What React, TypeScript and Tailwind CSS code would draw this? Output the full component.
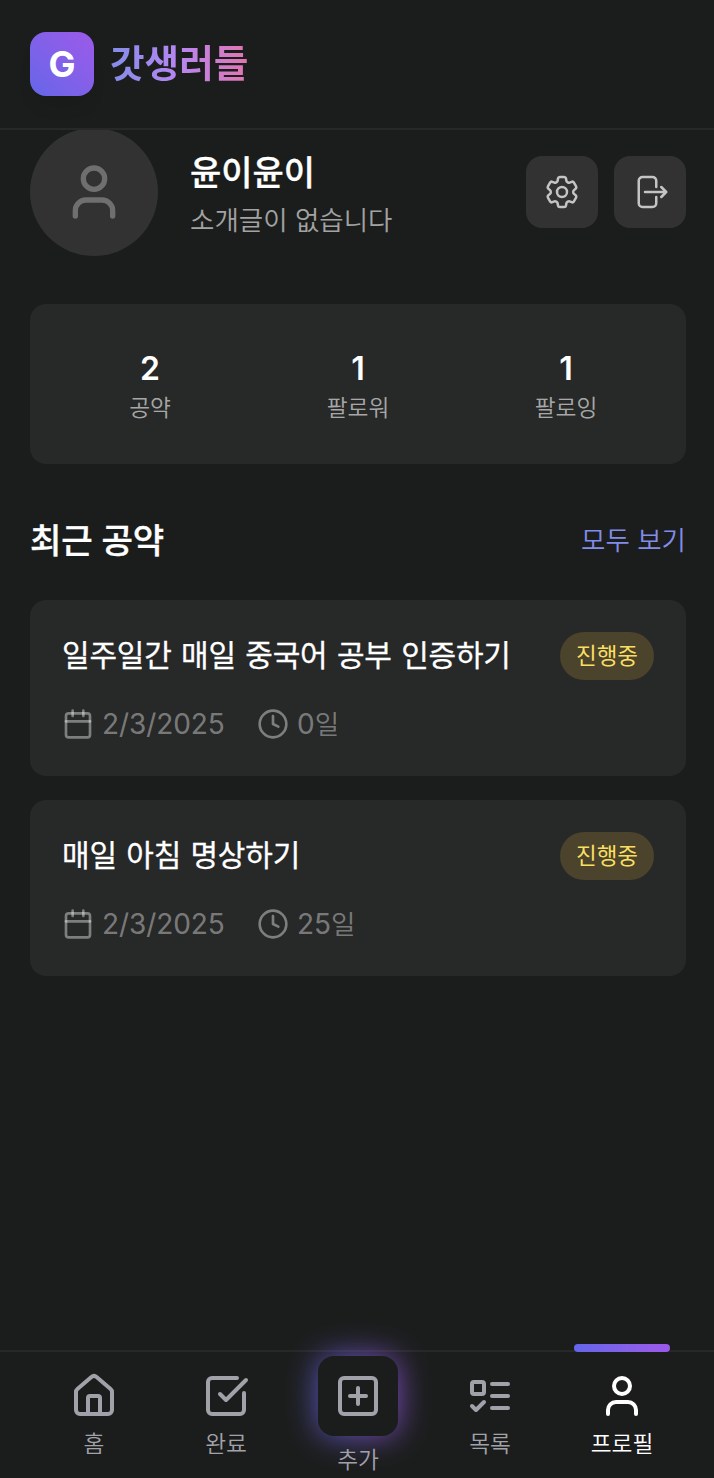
import type { ReactNode } from "react";
import { Calendar, Clock, House, SquarePlus, User } from "lucide-react";
import { HiOutlineArrowRightOnRectangle, HiOutlineCog6Tooth } from "react-icons/hi2";

function CheckBoxIcon() {
  return (
    <svg width="48" height="48" viewBox="0 0 24 24" fill="none" stroke="currentColor" strokeWidth="2" strokeLinecap="round" strokeLinejoin="round">
      <path d="M21 10.5V19a2 2 0 0 1-2 2H5a2 2 0 0 1-2-2V5a2 2 0 0 1 2-2h12.5" />
      <path d="m9 11 3 3L22 4" />
    </svg>
  );
}

function TodoIcon() {
  return (
    <svg width="48" height="48" viewBox="0 0 24 24" fill="none" stroke="currentColor" strokeWidth="2" strokeLinecap="round" strokeLinejoin="round">
      <rect x="3" y="5" width="6" height="6" rx="1" />
      <path d="m3 17 2 2 4-4" />
      <path d="M13 6h8" />
      <path d="M13 12h8" />
      <path d="M13 18h8" />
    </svg>
  );
}

function Stat({ value, label }: { value: string; label: string }) {
  return (
    <div className="flex flex-1 flex-col items-center">
      <span className="h-10 text-[32px] font-semibold leading-[41px] text-white">{value}</span>
      <span className="h-10 text-[22.7px] font-[350] leading-[40px] text-white/60">{label}</span>
    </div>
  );
}

function PledgeCard({ title, date, days }: { title: string; date: string; days: string }) {
  return (
    <article className="flex h-[176px] flex-col rounded-2xl bg-[#272828] px-8 pt-8">
      <div className="flex h-12 items-center justify-between">
        <h3 className="h-12 text-[30px] leading-[46px] tracking-[-0.2px] text-white [-webkit-text-stroke:0.3px] [word-spacing:1.2px]">{title}</h3>
        <span className="flex h-12 w-[94px] justify-center rounded-full bg-[#4b432b] text-[22.5px] leading-[47px] text-[#f8df62]">진행중</span>
      </div>
      <div className="mt-6 flex h-10 items-center text-[28px] text-white/40">
        <span className="flex w-[195px] items-center gap-2">
          <Calendar size={32} />
          <span className="tracking-[-0.08px]">{date}</span>
        </span>
        <span className="flex items-center gap-2">
          <Clock size={32} />
          <span>
            {days}
            <span className="text-[26.5px] font-[350]">일</span>
          </span>
        </span>
      </div>
    </article>
  );
}

function NavItem({ icon, label, active = false }: { icon: ReactNode; label: string; active?: boolean }) {
  return (
    <a className={`relative flex w-[132px] flex-col items-center pt-5 ${active ? "text-white" : "text-[#a1a1a9]"}`}>
      {active && <span className="absolute -top-2 left-[18px] h-2 w-24 rounded-full bg-linear-to-r from-[#6466e9] to-[#9c59e9]" />}
      {icon}
      <span className="mt-2 text-[22.7px] font-[350] leading-[32px]">{label}</span>
    </a>
  );
}

export default function App() {
  return (
    <div className="flex h-[1478px] w-[714px] flex-col overflow-hidden bg-[#1b1d1c] font-['Inter','Noto_Sans_CJK_KR',sans-serif]">
      <header className="relative z-10 flex h-[130px] shrink-0 items-center gap-4 border-b-2 border-[#272828] bg-[#1b1d1c] pl-[30px]">
        <div className="flex size-16 items-center justify-center rounded-2xl bg-linear-to-tr from-[#6466e9] to-[#9c59e9] text-[36px] font-bold text-white shadow-[0_14px_18px_-6px_rgba(0,0,0,0.1)]">
          G
        </div>
        <h1 className="h-14 bg-linear-to-r from-[#828de9] via-[#b685f2] to-[#e274b1] bg-clip-text text-[37.6px] font-bold leading-[55px] text-transparent">갓생러들</h1>
      </header>

      <main className="-mt-[2px] flex flex-1 flex-col pl-[30px] pr-[28px]">
        <section className="flex h-32 items-center">
          <div className="flex size-32 items-center justify-center rounded-full bg-[#323232] text-[#6f6f6f]">
            <User size={64} />
          </div>
          <div className="ml-8 flex-1 pt-[6px]">
            <h2 className="h-[50px] text-[34px] font-medium leading-[49px] text-white [-webkit-text-stroke:0.3px]">윤이윤이</h2>
            <p className="h-[44px] text-[26.5px] font-[350] leading-[44px] text-white/60">소개글이 없습니다</p>
          </div>
          <div className="flex gap-4 text-[#c4c4c4]">
            <button className="flex size-[72px] items-center justify-center rounded-2xl bg-[#323232]">
              <HiOutlineCog6Tooth size={40} />
            </button>
            <button className="flex size-[72px] items-center justify-center rounded-2xl bg-[#323232]">
              <HiOutlineArrowRightOnRectangle size={40} />
            </button>
          </div>
        </section>

        <section className="mt-12 flex h-40 rounded-2xl bg-[#272828] px-4 pt-11">
          <Stat value="2" label="공약" />
          <Stat value="1" label="팔로워" />
          <Stat value="1" label="팔로잉" />
        </section>

        <section className="mt-12">
          <div className="flex h-14 items-center justify-between">
            <h2 className="h-14 text-[34.2px] font-medium leading-[57px] tracking-[-0.2px] text-white [-webkit-text-stroke:0.3px]">최근 공약</h2>
            <a className="h-14 text-[26.5px] font-[350] leading-[56px] text-[#828de9]">모두 보기</a>
          </div>
          <div className="mt-8 flex flex-col gap-6">
            <PledgeCard title="일주일간 매일 중국어 공부 인증하기" date="2/3/2025" days="0" />
            <PledgeCard title="매일 아침 명상하기" date="2/3/2025" days="25" />
          </div>
        </section>
      </main>

      <nav className="flex h-32 shrink-0 border-t-2 border-[#272828] pl-[28px]">
        <NavItem icon={<House size={48} />} label="홈" />
        <NavItem icon={<CheckBoxIcon />} label="완료" />
        <a className="relative flex w-[132px] flex-col items-center pt-1 text-[#a1a1a9]">
          <span className="absolute left-[26px] top-1 size-20 rounded-2xl bg-linear-to-r from-[#6466e9] to-[#9c59e9] opacity-80 blur-lg" />
          <span className="relative flex size-20 items-center justify-center rounded-2xl bg-[#1b1d1c]">
            <SquarePlus size={48} />
          </span>
          <span className="relative mt-2 text-[22.7px] font-[350] leading-[32px]">추가</span>
        </a>
        <NavItem icon={<TodoIcon />} label="목록" />
        <NavItem icon={<User size={48} />} label="프로필" active />
      </nav>
    </div>
  );
}
